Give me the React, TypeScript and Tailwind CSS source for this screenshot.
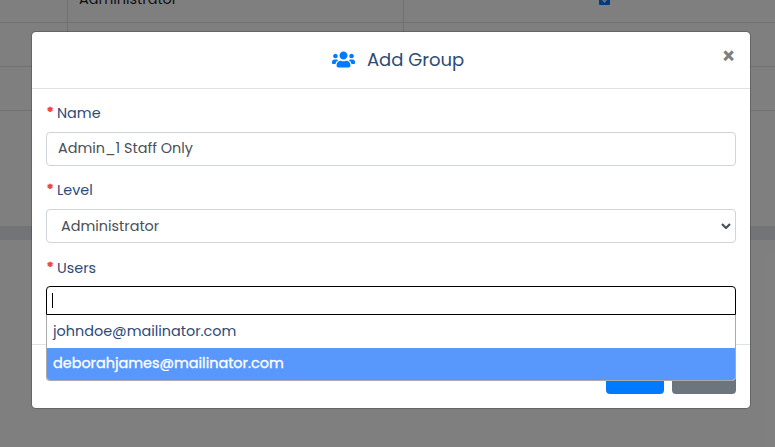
import { FaUsers } from "react-icons/fa";

const USERS = ["johndoe@mailinator.com", "deborahjames@mailinator.com"];

function FieldLabel({ text }: { text: string }) {
  return (
    <div className="flex h-6 items-center text-[14.4px] text-[#2c4a78]">
      <span className="w-[11px] pb-[2px] font-black text-[#f44336]">*</span>
      <span>{text}</span>
    </div>
  );
}

function GroupsTable() {
  return (
    <div className="h-full bg-white">
      <div className="flex h-[23px] items-end border-b border-[#dee2e6] text-[#212529]">
        <div className="h-full w-[68px] border-r border-[#dee2e6]" />
        <div className="h-full w-[336px] border-r border-[#dee2e6] pl-[11px] leading-5">
          <span className="relative -top-[11px] text-[14.4px]">Administrator</span>
        </div>
        <div className="flex h-full flex-1 justify-center pl-[30px]">
          <div className="h-[5px] w-[11px] rounded-b-[1px] bg-[#0075ff]">
            <div className="mx-auto h-[3px] w-[5px] bg-white/80 [clip-path:polygon(0_0,100%_0,50%_100%)]" />
          </div>
        </div>
      </div>
      <div className="flex h-11 border-b border-[#dee2e6]">
        <div className="w-[68px] border-r border-[#dee2e6]" />
        <div className="w-[336px] border-r border-[#dee2e6]" />
      </div>
      <div className="h-11 border-b border-[#dee2e6]" />
      <div className="mt-[115px] h-3.5 bg-[#e4e8f0]" />
    </div>
  );
}

export default function App() {
  return (
    <div className="relative h-[447px] w-[775px] overflow-hidden font-[Poppins,Inter,sans-serif]">
      <GroupsTable />
      <div className="absolute inset-0 bg-black/50 pt-[31px] pl-[31px]">
        <div className="flex h-[378px] w-[720px] flex-col rounded-[5px] border border-black/20 bg-white bg-clip-padding">
          <div className="relative flex h-[57px] shrink-0 items-center justify-center border-b border-[#dee2e6] pb-[2px] pl-[14px]">
            <FaUsers className="mr-3 h-[23px] w-[23px] text-[#007bff]" />
            <h5 className="text-[18px] text-[#2c4a78]">Add Group</h5>
            <button className="absolute top-[13px] right-[14px] text-[22px] leading-6 font-semibold text-[#7f7f7f]">×</button>
          </div>

          <div className="h-[255px] shrink-0 px-[14px] pt-[13px]">
            <FieldLabel text="Name" />
            <div className="mt-[6px] flex h-[34px] items-center rounded border border-[#ced4da] px-[11px] text-[14.4px] text-[#495057]">
              Admin_1 Staff Only
            </div>
            <div className="mt-[13px]">
              <FieldLabel text="Level" />
            </div>
            <div className="mt-[6px] flex h-[34px] items-center justify-between rounded border border-[#ced4da] pr-1 pl-[14px] text-[14.4px] text-[#495057]">
              <span className="pt-px">Administrator</span>
              <svg className="h-[6px] w-[10px]" viewBox="0 0 10 6" fill="none" stroke="#495057" strokeWidth="2.2">
                <path d="M1 1l4 4 4-4" />
              </svg>
            </div>
            <div className="mt-[14px]">
              <FieldLabel text="Users" />
            </div>
            <div className="relative mt-[5px]">
              <div className="flex h-[29px] items-center rounded-t border border-black pl-[5px]">
                <div className="h-[15px] w-px bg-black" />
              </div>
              <ul className="absolute top-[29px] right-0 left-0 z-10 rounded-b border border-t-0 border-[#aaa] bg-white text-[14.4px] text-[#2c4a78]">
                <li className="flex h-[33px] items-center pl-[6px]">{USERS[0]}</li>
                <li className="flex h-8 items-center rounded-b-[3px] bg-[#5897fb] pl-[6px] text-white [-webkit-text-stroke:0.3px_white]">{USERS[1]}</li>
              </ul>
            </div>
          </div>

          <div className="flex flex-1 items-end justify-end gap-2 border-t border-[#dee2e6] px-[14px] pb-[14px] text-[14.4px] leading-[22px] text-white">
            <button className="flex h-[34px] w-[58px] justify-center rounded bg-[#007bff] pt-[5px]">Save</button>
            <button className="flex h-[34px] w-16 justify-center rounded bg-[#6c757d] pt-[5px]">Close</button>
          </div>
        </div>
      </div>
    </div>
  );
}
